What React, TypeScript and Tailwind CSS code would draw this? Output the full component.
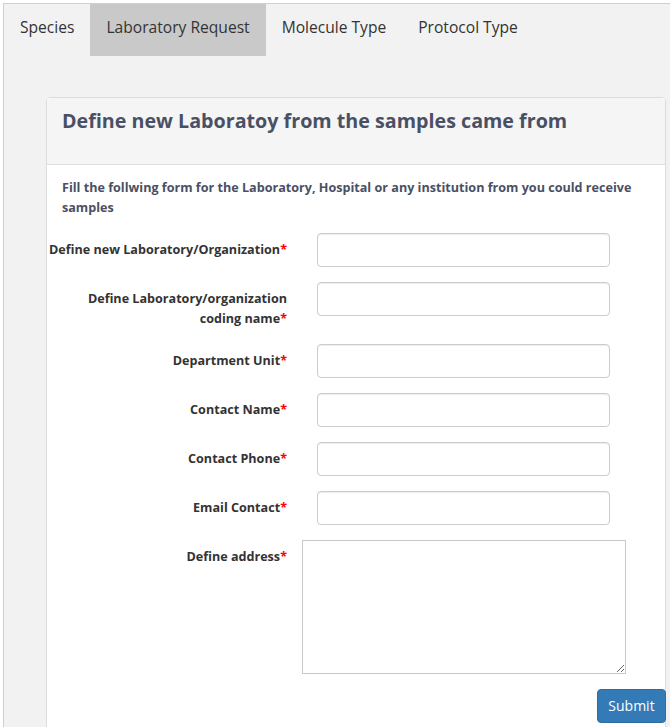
import { useState } from "react";

const TABS = ["Species", "Laboratory Request", "Molecule Type", "Protocol Type"];

const FIELDS: { label: string; wrap?: boolean }[] = [
  { label: "Define new Laboratory/Organization" },
  { label: "Define Laboratory/organization coding name", wrap: true },
  { label: "Department Unit" },
  { label: "Contact Name" },
  { label: "Contact Phone" },
  { label: "Email Contact" },
];

function Label({ text, wrap }: { text: string; wrap?: boolean }) {
  if (wrap) {
    return (
      <label className="w-[255px] shrink-0 pl-[30px] pr-[15px] pt-[7px] text-right text-[12.6px] font-bold leading-5 text-[#333]">
        {text}
        <span className="text-[#ff0000]">*</span>
      </label>
    );
  }
  // single-line labels overflow to the left instead of wrapping
  return (
    <label className="flex w-[255px] shrink-0 justify-end whitespace-nowrap pr-[15px] pt-[7px] text-[12.6px] font-bold leading-5 text-[#333]">
      <span>
        {text}
        <span className="text-[#ff0000]">*</span>
      </span>
    </label>
  );
}

export default function App() {
  const [active, setActive] = useState(1);

  return (
    <div className="h-[727px] w-[670px] overflow-hidden bg-white pl-[3px] pt-[3px] font-['Open_Sans',sans-serif]">
      <div className="h-[760px] w-[700px] border-l border-t border-[#cfcfcf] bg-[#f2f2f2]">
        {/* Tabs */}
        <div className="flex h-[52px]">
          {TABS.map((t, i) => (
            <button
              key={t}
              onClick={() => setActive(i)}
              className={
                "px-4 pb-1 text-[15.6px] text-[#333] " + (active === i ? "bg-[#c9c9c9]" : "")
              }
            >
              {t}
            </button>
          ))}
        </div>

        {/* Panel */}
        <div className="ml-[42px] mt-[41px] w-[620px] rounded-t border border-[#dddddd] bg-white shadow-[0_1px_1px_rgba(0,0,0,0.05)]">
          <div className="h-[67px] border-b border-[#dddddd] bg-[#f5f5f5] px-[15px] pt-[9px]">
            <h3 className="text-[19.7px] font-bold leading-[28px] text-[#4a5063]">
              Define new Laboratoy from the samples came from
            </h3>
          </div>

          <div className="pb-[30px] pt-[13px]">
            <p className="px-[15px] text-[12.6px] font-bold leading-5 text-[#4a5063]">
              Fill the follwing form for the Laboratory, Hospital or any institution from you could
              receive samples
            </p>

            <form className="mt-[15px] flex flex-col gap-[15px]" onSubmit={(e) => e.preventDefault()}>
              {FIELDS.map((f) => (
                <div key={f.label} className="flex items-start">
                  <Label text={f.label} wrap={f.wrap} />
                  <div className="pl-[15px]">
                    <input
                      type="text"
                      className="h-[34px] w-[293px] rounded border border-[#cccccc] bg-white px-3 text-sm shadow-[inset_0_1px_1px_rgba(0,0,0,0.075)] outline-none"
                    />
                  </div>
                </div>
              ))}
              <div className="flex items-start">
                <Label text="Define address" />
                <textarea className="h-[134px] w-[324px] border border-[#c8c8c8] bg-white outline-none" />
              </div>
              <div className="flex justify-end">
                <button
                  type="submit"
                  className="-mr-px h-[34px] w-[69px] rounded border border-[#2e6da4] bg-[#337ab7] text-sm text-white"
                >
                  Submit
                </button>
              </div>
            </form>
          </div>
        </div>
      </div>
    </div>
  );
}
